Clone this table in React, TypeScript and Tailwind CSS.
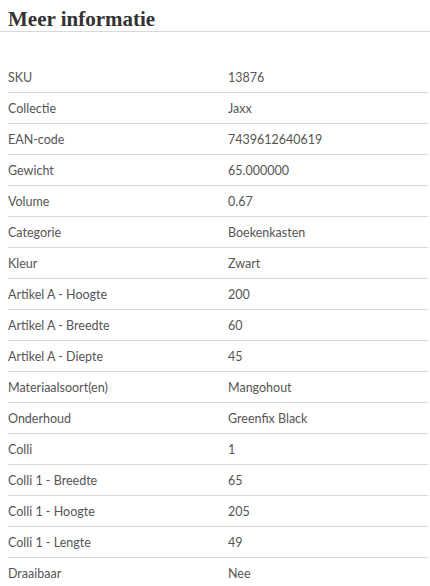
const ROWS: [string, string][] = [
  ["SKU", "13876"],
  ["Collectie", "Jaxx"],
  ["EAN-code", "7439612640619"],
  ["Gewicht", "65.000000"],
  ["Volume", "0.67"],
  ["Categorie", "Boekenkasten"],
  ["Kleur", "Zwart"],
  ["Artikel A - Hoogte", "200"],
  ["Artikel A - Breedte", "60"],
  ["Artikel A - Diepte", "45"],
  ["Materiaalsoort(en)", "Mangohout"],
  ["Onderhoud", "Greenfix Black"],
  ["Colli", "1"],
  ["Colli 1 - Breedte", "65"],
  ["Colli 1 - Hoogte", "205"],
  ["Colli 1 - Lengte", "49"],
  ["Draaibaar", "Nee"],
];

export default function App() {
  return (
    <div className="w-[430px] bg-white text-[#333]">
      <h2 className="border-b border-[#d5d8dd] px-2 pt-[8px] pb-[1px] font-['Liberation_Serif',serif] text-[21px] font-bold leading-[22px] text-[#333]">
        Meer informatie
      </h2>
      <div className="mt-[30px] pl-2 pr-[2px] font-['Lato',sans-serif] text-[12.5px] text-[#555]">
        {ROWS.map(([label, value]) => (
          <div
            key={label}
            className="grid h-[31px] grid-cols-[220px_1fr] items-center border-b border-[#d5d8dd] pt-[2px]"
          >
            <span>{label}</span>
            <span>{value}</span>
          </div>
        ))}
      </div>
    </div>
  );
}
